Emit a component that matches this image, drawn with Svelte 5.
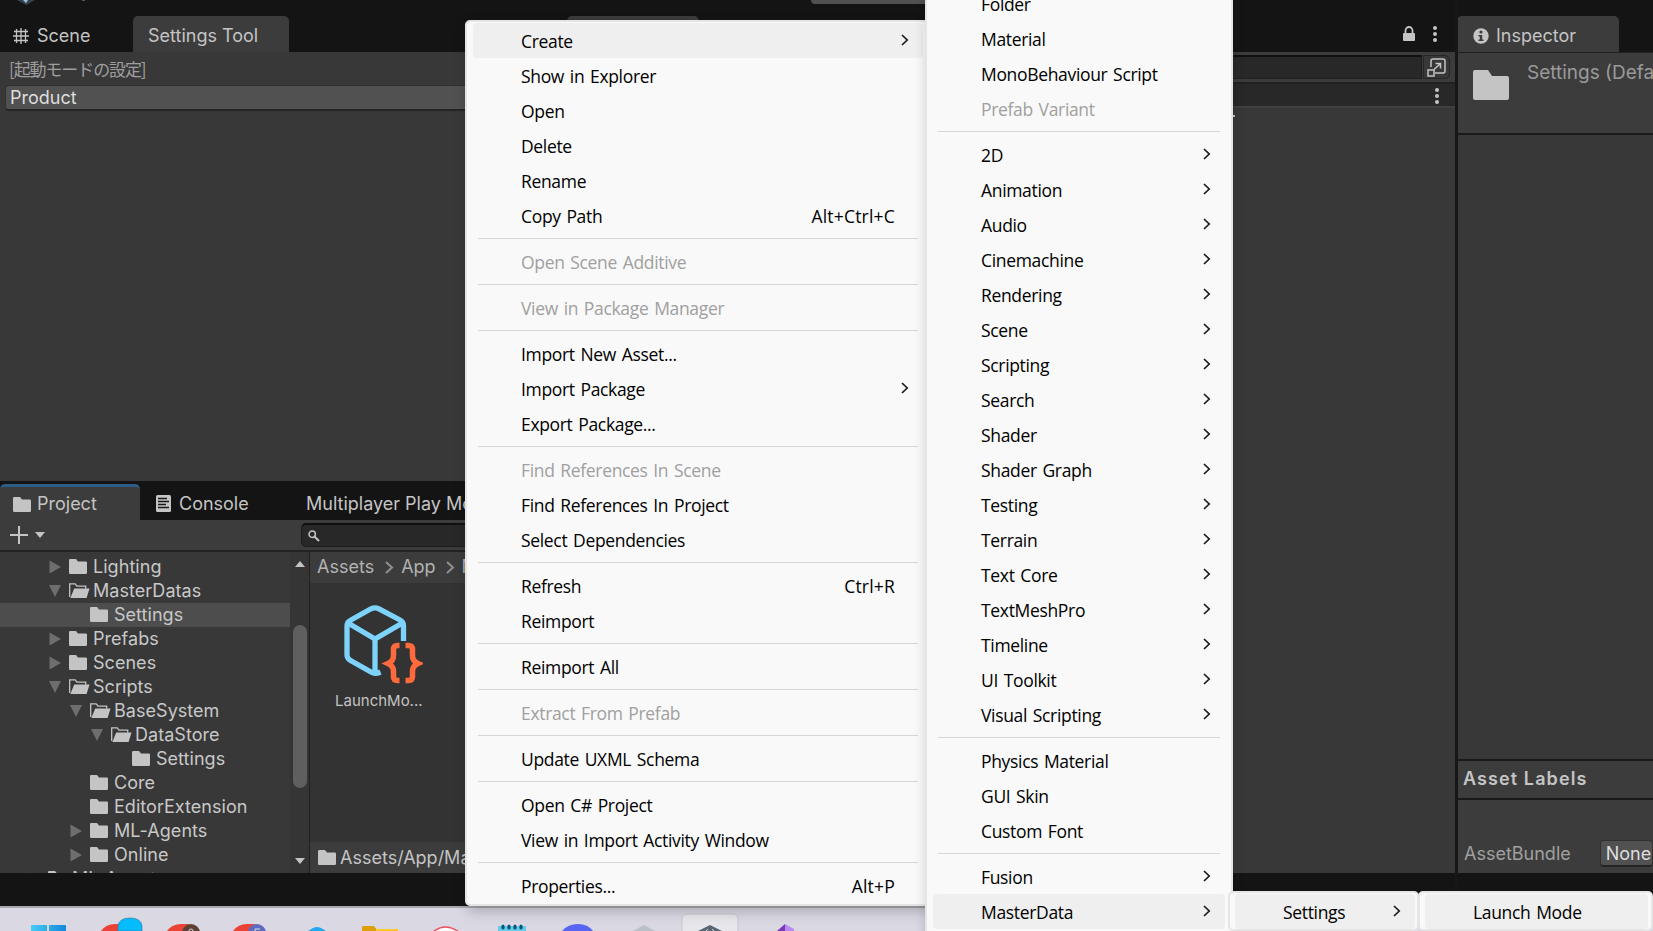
<svelte:options runes={true} />
<script lang="ts">
  type MenuItem = { label: string; key?: string; sub?: boolean; off?: boolean; active?: boolean };
  type TreeRow = { label: string; depth: number; arrow?: 'open' | 'closed'; selected?: boolean };

  const tree: TreeRow[] = [
    { label: 'Lighting', depth: 2, arrow: 'closed' },
    { label: 'MasterDatas', depth: 2, arrow: 'open' },
    { label: 'Settings', depth: 3, selected: true },
    { label: 'Prefabs', depth: 2, arrow: 'closed' },
    { label: 'Scenes', depth: 2, arrow: 'closed' },
    { label: 'Scripts', depth: 2, arrow: 'open' },
    { label: 'BaseSystem', depth: 3, arrow: 'open' },
    { label: 'DataStore', depth: 4, arrow: 'open' },
    { label: 'Settings', depth: 5 },
    { label: 'Core', depth: 3 },
    { label: 'EditorExtension', depth: 3 },
    { label: 'ML-Agents', depth: 3, arrow: 'closed' },
    { label: 'Online', depth: 3, arrow: 'closed' },
    { label: 'ML-Agents', depth: 1, arrow: 'closed' }
  ];

  const assetMenu: MenuItem[][] = [
    [
      { label: 'Create', sub: true, active: true },
      { label: 'Show in Explorer' },
      { label: 'Open' },
      { label: 'Delete' },
      { label: 'Rename' },
      { label: 'Copy Path', key: 'Alt+Ctrl+C' }
    ],
    [{ label: 'Open Scene Additive', off: true }],
    [{ label: 'View in Package Manager', off: true }],
    [{ label: 'Import New Asset...' }, { label: 'Import Package', sub: true }, { label: 'Export Package...' }],
    [
      { label: 'Find References In Scene', off: true },
      { label: 'Find References In Project' },
      { label: 'Select Dependencies' }
    ],
    [{ label: 'Refresh', key: 'Ctrl+R' }, { label: 'Reimport' }],
    [{ label: 'Reimport All' }],
    [{ label: 'Extract From Prefab', off: true }],
    [{ label: 'Update UXML Schema' }],
    [{ label: 'Open C# Project' }, { label: 'View in Import Activity Window' }],
    [{ label: 'Properties...', key: 'Alt+P' }]
  ];

  const categories = [
    '2D', 'Animation', 'Audio', 'Cinemachine', 'Rendering', 'Scene', 'Scripting', 'Search', 'Shader',
    'Shader Graph', 'Testing', 'Terrain', 'Text Core', 'TextMeshPro', 'Timeline', 'UI Toolkit', 'Visual Scripting'
  ];

  const createMenu: MenuItem[][] = [
    [
      { label: 'Folder' },
      { label: 'Material' },
      { label: 'MonoBehaviour Script' },
      { label: 'Prefab Variant', off: true }
    ],
    categories.map((label) => ({ label, sub: true })),
    [{ label: 'Physics Material' }, { label: 'GUI Skin' }, { label: 'Custom Font' }],
    [{ label: 'Fusion', sub: true }, { label: 'MasterData', sub: true, active: true }]
  ];

  const settingsMenu: MenuItem[][] = [[{ label: 'Settings', sub: true, active: true }]];
  const launchMenu: MenuItem[][] = [[{ label: 'Launch Mode', active: true }]];
</script>

{#snippet folder()}
  <svg class="folder" width="18" height="15" viewBox="0 0 18 15">
    <path d="M1.2 0H7l2 2.6h7.8A1.2 1.2 0 0 1 18 3.8v10a1.2 1.2 0 0 1-1.2 1.2H1.2A1.2 1.2 0 0 1 0 13.8V1.2A1.2 1.2 0 0 1 1.2 0z" fill="#c4c4c4" />
  </svg>
{/snippet}

{#snippet folderOpen()}
  <svg class="folder" width="21" height="15" viewBox="0 0 21 15">
    <path d="M.7 14V.8h5.500l1.800 2.400h8.700v2.600" fill="none" stroke="#c4c4c4" stroke-width="1.3" />
    <path d="M5.2 5.6h15.3L17.6 15H1.4z" fill="#c4c4c4" />
  </svg>
{/snippet}

{#snippet kebab()}
  <svg class="kebab" width="6" height="16" viewBox="0 0 6 16" fill="#c4c4c4">
    <circle cx="3" cy="2" r="2" /><circle cx="3" cy="8" r="2" /><circle cx="3" cy="14" r="2" />
  </svg>
{/snippet}

{#snippet menu(groups: MenuItem[][], name: string)}
  <div class="menu {name}">
    {#each groups as group}
      <div class="group">
        {#each group as item}
          <div class="item" class:off={item.off} class:active={item.active}>
            <span>{item.label}</span>
            {#if item.key}<span class="key">{item.key}</span>{/if}
            {#if item.sub}
              <svg class="chev" width="8" height="12" viewBox="0 0 8 12">
                <path d="M1 1l5.2 5L1 11" fill="none" stroke="#1b1b1b" stroke-width="1.7" />
              </svg>
            {/if}
          </div>
        {/each}
      </div>
    {/each}
  </div>
{/snippet}

<div class="screen">
  <div class="editor">
    <div class="left">
      <div class="titlebar">
        <svg class="logo" width="18" height="5" viewBox="0 0 18 5">
          <path d="M0 0h18L9.500 5z" fill="#33434f" /><path d="M6 0h5L9 3z" fill="#a9bfce" />
        </svg>
        <i class="speck"></i>
      </div>
      <div class="tabs upper">
        <div class="tab scene">
          <svg width="16" height="16" viewBox="0 0 16 16" stroke="#c4c4c4" stroke-width="1.3">
            <path d="M3.500 1v14M8 0v16M12.500 1v14M1 3.500h14M0 8h16M1 12.500h14" fill="none" />
          </svg>
          Scene
        </div>
        <div class="tab current settings-tab">Settings Tool</div>
      </div>
      <div class="tool">
        <div class="heading">[起動モードの設定]</div>
        <div class="dropdown">Product</div>
      </div>

      <div class="tabs lower">
        <div class="tab current project">{@render folder()}Project</div>
        <div class="tab console">
          <svg width="15" height="17" viewBox="0 0 15 17">
            <rect width="15" height="17" rx="1.500" fill="#c4c4c4" />
            <path d="M2 3.500h9M2 6.500h11M2 9.500h8M2 12.500h11" stroke="#191919" stroke-width="1.300" />
          </svg>
          Console
        </div>
        <div class="tab">Multiplayer Play Mode</div>
      </div>
      <div class="toolbar">
        <svg class="plus" width="36" height="18" viewBox="0 0 36 18">
          <path d="M9 0v18M0 9h18" stroke="#c4c4c4" stroke-width="2" />
          <path d="M25 6h10l-5 6z" fill="#c4c4c4" />
        </svg>
        <div class="search">
          <svg width="12" height="12" viewBox="0 0 12 12" fill="none" stroke="#c4c4c4">
            <circle cx="4.200" cy="4.200" r="3.200" stroke-width="1.500" /><path d="M6.500 6.500L11 11" stroke-width="2" />
          </svg>
        </div>
      </div>
      <div class="browser">
        <div class="tree">
          {#each tree as row}
            <div class="row" class:selected={row.selected} style="padding-left: {row.depth * 21 + 6}px">
              <span class="arrow">
                {#if row.arrow === 'closed'}
                  <svg width="12" height="14"><path d="M.5 .5L12 7L.5 13.500z" fill="#6e6e6e" /></svg>
                {:else if row.arrow === 'open'}
                  <svg width="12" height="12"><path d="M0 0h12L6 12z" fill="#6e6e6e" /></svg>
                {/if}
              </span>
              <span class="icon">
                {#if row.arrow === 'open'}{@render folderOpen()}{:else}{@render folder()}{/if}
              </span>
              {row.label}
            </div>
          {/each}
        </div>
        <div class="scroll">
          <svg width="10" height="6"><path d="M5 0l5 6H0z" fill="#c4c4c4" /></svg>
          <div class="thumb"></div>
          <svg class="down" width="10" height="6"><path d="M0 0h10L5 6z" fill="#c4c4c4" /></svg>
        </div>
        <div class="assets">
          <div class="crumbs">
            <span>Assets</span>
            <svg width="9" height="13"><path d="M1 1l6 5.500L1 12" fill="none" stroke="#909090" stroke-width="2" /></svg>
            <span>App</span>
            <svg width="9" height="13"><path d="M1 1l6 5.500L1 12" fill="none" stroke="#909090" stroke-width="2" /></svg>
            <span>MasterDatas</span>
          </div>
          <div class="asset">
            <svg width="80" height="80" viewBox="0 0 80 80" fill="none">
              <path d="M60.500 36V20.500Q60.500 17 57 15L36 3.800Q32 1.800 28 3.800L8 15Q4 17 4 20.500V50Q4 53.500 7.500 55.500L28 67Q32 69.500 37.500 67M5 18L32 34L59.500 18M32 34V67" stroke="#7dd3fb" stroke-width="5.300" />
              <path d="M56.500 40.500h-2q-4 0-4 4V51q0 5-5.500 7.500q5.500 2.500 5.500 7.500v5.500q0 4 4 4h2M62.500 40.500h3q4 0 4 4V51q0 5 5.500 7.500q-5.500 2.500-5.500 7.500v5.500q0 4-4 4h-3" stroke="#ff6a3d" stroke-width="5.500" />
            </svg>
            <span>LaunchMo...</span>
          </div>
          <div class="path">{@render folder()}<span>Assets/App/MasterDatas/Settings</span></div>
        </div>
      </div>
      <div class="status"></div>
    </div>

    <div class="middle">
      <div class="titlebar"><i class="playbar"></i></div>
      <div class="tabs upper">
        <div class="tab current hidden-tab"></div>
        <div class="tab-tools">
          <svg width="12" height="15" viewBox="0 0 12 15">
            <path d="M2.500 8V4.500a3.500 3.500 0 0 1 7 0V8" fill="none" stroke="#c4c4c4" stroke-width="1.800" />
            <rect y="7" width="12" height="8" rx="1" fill="#c4c4c4" />
          </svg>
          {@render kebab()}
        </div>
      </div>
      <div class="graph-bar">
        <div class="field"></div>
        <div class="expand">
          <svg width="19" height="19" viewBox="0 0 19 19" fill="none" stroke="#c4c4c4" stroke-width="1.500">
            <path d="M4 9V3q0-2 2-2h10q2 0 2 2v10q0 2-2 2H8" />
            <rect x="1" y="12" width="6" height="6" />
            <path d="M7 11.500L13 6M8.500 5.500H13.500V10.500" />
          </svg>
        </div>
      </div>
      <div class="graph-head">{@render kebab()}</div>
      <div class="graph"><i></i></div>
      <div class="status"></div>
    </div>

    <div class="inspector">
      <div class="titlebar"></div>
      <div class="tabs upper">
        <div class="tab current info">
          <svg width="16" height="16" viewBox="0 0 16 16">
            <circle cx="8" cy="8" r="7.700" fill="#c4c4c4" />
            <circle cx="8" cy="4" r="1.600" fill="#3c3c3c" />
            <path d="M5.500 7h3.700v4.600h1.300v1.400h-5v-1.400h1.300V8.400H5.500z" fill="#3c3c3c" />
          </svg>
          Inspector
        </div>
      </div>
      <div class="asset-head">
        <svg width="36" height="30" viewBox="0 0 36 30">
          <path d="M2 0h13l4 6h15a2 2 0 0 1 2 2v20a2 2 0 0 1-2 2H2a2 2 0 0 1-2-2V2a2 2 0 0 1 2-2z" fill="#c4c4c4" />
        </svg>
        <span>Settings (Default Asset)</span>
      </div>
      <div class="blank"></div>
      <div class="labels">Asset Labels</div>
      <div class="bundle"><span>AssetBundle</span><div class="select">None</div></div>
      <div class="status"></div>
    </div>
  </div>

  <div class="taskbar">
    <svg width="900" height="23" viewBox="0 908 900 23">
      <defs>
        <linearGradient id="win"><stop offset="0" stop-color="#45ccf8" /><stop offset="1" stop-color="#1387dc" /></linearGradient>
      </defs>
      <path d="M31 926q0-1 1-1h15v6H31zM49 925h16q1 0 1 1v5H49z" fill="url(#win)" />
      <path d="M101 931q5-7 14-7h8v7zM167 931q5-7 14-7h8v7zM233 931q5-7 14-7h8v7z" fill="#ea4335" />
      <path d="M118 931v-5q1-8 12-8t12 8v5z" fill="#05bcff" stroke="#397da2" stroke-width=".7" />
      <circle cx="191" cy="933" r="9" fill="#5c4037" /><circle cx="257" cy="933" r="9" fill="#5c6bc0" />
      <path d="M189 931q0-2 2-2t2 2M255 931v-2h5" stroke="#ddd" fill="none" />
      <path d="M308 931l5-3q4-2 8 0l5 3z" fill="#20a9ec" />
      <path d="M362 931v-4q0-1 2-1h10l3 4v1z" fill="#df9f08" /><path d="M376 929h22v2h-22z" fill="#fbc82a" />
      <path d="M433 932q12-10 26 0" fill="#fff" stroke="#ee5365" stroke-width="1.500" />
      <path d="M498 931v-4q0-1 1-1h26q1 0 1 1v4z" fill="#62cbe8" />
      <g fill="#0a5577"><ellipse cx="503" cy="927" rx="1.700" ry="2.500" /><ellipse cx="509" cy="927" rx="1.700" ry="2.500" /><ellipse cx="515" cy="927" rx="1.700" ry="2.500" /><ellipse cx="521" cy="927" rx="1.700" ry="2.500" /></g>
      <path d="M562 931q6-7 16-7t15 7z" fill="#5865f2" />
      <path d="M633 931l11-6 11 6z" fill="#b9c0c7" />
      <rect x="682" y="914" width="56" height="40" rx="5" fill="#e7e6eb" stroke="#c9c8cf" />
      <path d="M698 931l12-6 12 6z" fill="#596774" /><path d="M706 931l2-2M714 931l-2-2" stroke="#cfd6dc" />
      <path d="M777 931l8-7v7z" fill="#7739b7" /><path d="M785 924l9 5v2h-9z" fill="#bb8af0" />
    </svg>
  </div>

  {@render menu(assetMenu, 'm-asset')}
  {@render menu(createMenu, 'm-create')}
  {@render menu(settingsMenu, 'm-settings')}
  {@render menu(launchMenu, 'm-launch')}
</div>

<style>
  :global(body) { margin: 0; background: #141414; }
  .screen { position: relative; width: 1653px; height: 931px; overflow: hidden; display: flex; flex-direction: column; font: 18px/24px Inter, sans-serif; color: #c4c4c4; white-space: nowrap; }
  .screen div { box-sizing: border-box; }
  svg { display: block; flex: none; }

  .editor { height: 906px; display: grid; grid-template-columns: 560px 895px 1fr; background: #141414; }
  .left, .middle, .inspector { display: flex; flex-direction: column; min-width: 0; height: 906px; overflow: hidden; }
  .titlebar { height: 16px; flex: none; display: flex; align-items: flex-start; }
  .logo { margin-left: 17px; }
  .speck { width: 3px; height: 1px; margin-left: 47px; background: #555; }
  .playbar { width: 160px; height: 4px; margin-left: 251px; background: #515151; border-radius: 0 0 0 6px; }
  .tabs { display: flex; flex: none; }
  .tabs.upper { height: 36px; }
  .tabs.lower { height: 39px; padding-top: 3px; background: #141414; }
  .tab { display: flex; align-items: center; gap: 8px; padding-top: 3px; }
  .tab.current { background: #3c3c3c; border-radius: 5px 5px 0 0; }
  .scene { width: 133px; padding-left: 13px; }
  .settings-tab { width: 156px; padding-left: 15px; }
  .tool { height: 429px; flex: none; background: #383838; padding: 5px 0 0 5px; }
  .heading { height: 24px; padding-left: 4px; color: #9e9e9e; font: 17px/24px "Noto Sans CJK JP", sans-serif; letter-spacing: -1.1px; }
  .dropdown { height: 26px; margin-top: 4px; padding-left: 4px; border: 1px solid #303030; border-bottom: 2px solid #242424; border-radius: 4px; background: #515151; color: #dedede; line-height: 23px; }
  .project { width: 140px; padding: 1px 0 0 13px; gap: 6px; border-top: 3px solid #2c5d87; }
  .console { width: 166px; padding-left: 16px; }
  .toolbar { height: 32px; flex: none; display: flex; align-items: flex-start; background: #3c3c3c; border-bottom: 2px solid #232323; padding-top: 3px; }
  .plus { margin: 3px 0 0 10px; }
  .search { flex: 1; height: 24px; margin-left: 255px; padding: 5px 6px; background: #282828; border: 1px solid #1c1c1c; border-top: 2px solid #101010; border-radius: 5px; }
  .browser { height: 321px; flex: none; display: flex; }
  .tree { width: 290px; padding-top: 3px; background: #383838; overflow: hidden; color: #c8c8c8; }
  .row { height: 24px; display: flex; align-items: center; padding-bottom: 1px; letter-spacing: 0.04px; }
  .row.selected { background: #4d4d4d; }
  .arrow { width: 21px; padding-left: 1px; box-sizing: border-box; }
  .icon { width: 24px; }
  .scroll { width: 20px; display: flex; flex-direction: column; align-items: center; background: #353535; border-right: 1px solid #202020; padding-top: 9px; }
  .thumb { width: 14px; height: 163px; margin-top: 58px; border-radius: 7px; background: #5f5f5f; }
  .down { margin-top: 70px; }
  .assets { flex: 1; display: flex; flex-direction: column; background: #333; overflow: hidden; }
  .crumbs { height: 31px; display: flex; align-items: center; background: #3c3c3c; color: #b2b2b2; padding: 0 0 2px 7px; }
  .crumbs svg { margin: 2px 7px 0 11px; }
  .crumbs svg + span + svg { margin-left: 10px; }
  .asset { width: 86px; margin: 22px 0 0 32px; display: flex; flex-direction: column; font-size: 15px; }
  .asset svg { margin-left: 1px; }
  .asset span { margin-left: -7px; margin-top: 4px; }
  .path { height: 31px; margin-top: auto; display: flex; align-items: center; gap: 4px; padding-left: 8px; background: #3c3c3c; }
  .status { height: 33px; flex: none; background: #141414; }

  .hidden-tab { width: 132px; margin-left: 7px; }
  .tab-tools { display: flex; align-items: center; gap: 17px; margin-left: auto; padding: 0 17px 1px 0; }
  .graph-bar { height: 30px; flex: none; display: flex; background: #3c3c3c; padding: 3px 5px 3px 0; }
  .field { flex: 1; background: #282828; border: 1px solid #1e1e1e; border-top: 2px solid #101010; }
  .expand { width: 27px; margin-left: 1px; padding: 2px 3px; border: 1px solid #252525; border-radius: 0 5px 5px 0; background: #383838; }
  .graph-head { height: 26px; flex: none; display: flex; align-items: center; justify-content: flex-end; padding-right: 15px; padding-top: 1px; background: #282828; border-top: 2px solid #202020; border-bottom: 2px solid #404040; }
  .graph { flex: 1; background: #383838; padding: 7px 0 0 673px; }
  .graph i { display: block; width: 2px; height: 2px; background: #c4c4c4; }

  .inspector { border-left: 3px solid #171717; }
  .info { width: 162px; padding-left: 16px; margin-left: -1px; gap: 7px; }
  .asset-head { height: 83px; flex: none; display: flex; align-items: flex-start; background: #3c3c3c; border-top: 1px solid #222; border-bottom: 2px solid #1a1a1a; padding: 17px 0 0 15px; color: #9a9a9a; }
  .asset-head span { margin: -9px 0 0 18px; font-size: 19px; }
  .blank { flex: 1; background: #383838; }
  .labels { height: 41px; flex: none; border: solid #1a1a1a; border-width: 2px 0; background: #3c3c3c; padding-left: 5px; line-height: 36px; font-weight: 600; letter-spacing: 1.1px; }
  .bundle { height: 73px; flex: none; display: flex; align-items: center; background: #3c3c3c; padding: 37px 0 3px 6px; color: #a0a0a0; }
  .bundle span { padding-top: 1px; }
  .select { width: 80px; height: 27px; margin-left: 29px; padding-left: 5px; border: 1px solid #303030; border-bottom: 2px solid #242424; border-radius: 4px; background: #515151; color: #dedede; line-height: 26px; }

  .taskbar { height: 25px; background: #d9d8e3; border-top: 2px solid #a9a8ae; }

  .menu { position: absolute; background: #f9f9f9; border: 2px solid #e5e5e5; border-radius: 5px; color: #000; font: 17.5px/35px "Open Sans", sans-serif; letter-spacing: -0.33px; word-spacing: 1.5px; }
  .m-asset { left: 465px; top: 20px; width: 470px; padding: 1px 10px 1px 6px; box-shadow: 2px 5px 14px rgb(0 0 0 / 22%); }
  .m-create { left: 925px; top: -17px; width: 308px; height: 970px; padding: 1px 6px 0; box-shadow: 0 0 12px rgb(0 0 0 / 16%); }
  .m-settings { left: 1228px; top: 891px; width: 191px; padding: 1px 2px 0 5px; }
  .m-launch { left: 1418px; top: 891px; width: 235px; padding: 1px 3px 0 5px; }
  .group + .group { padding-top: 11px; background: linear-gradient(#d6d6d6, #d6d6d6) 5px 5px / calc(100% - 10px) 1px no-repeat; }
  .item { height: 35px; display: flex; align-items: center; padding-left: 48px; border-radius: 4px; }
  .item span { padding-top: 1px; }
  .m-settings .item { width: 180px; }
  .active { background: #efefef; }
  .off { color: #a0a0a0; }
  .key { margin-left: auto; margin-right: 28px; letter-spacing: 0.2px; }
  .chev { margin: 0 14px 2px auto; }
</style>
